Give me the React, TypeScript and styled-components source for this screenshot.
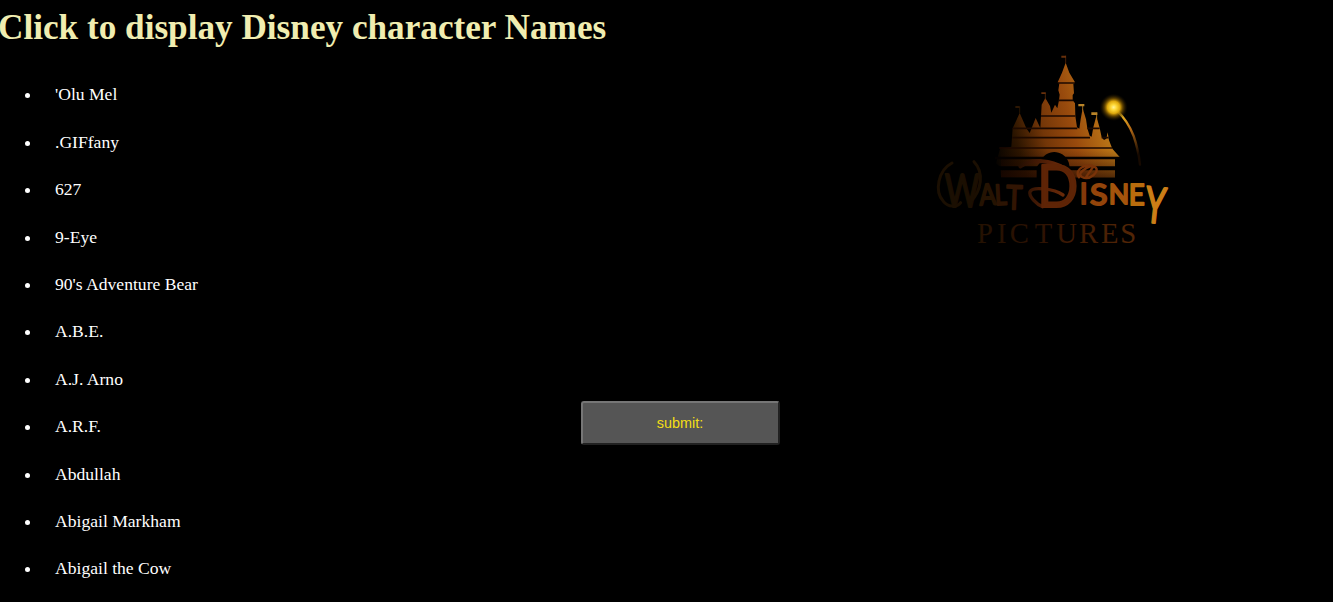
import React from "react";
import styled, { createGlobalStyle } from "styled-components";

const GlobalStyle = createGlobalStyle`
  html, body { margin: 0; background: #000; overflow: hidden; }
`;

const Page = styled.main`
  height: 602px;
  overflow: hidden;
  background: #000;
  color: #fff;
  font-family: "Liberation Serif", "Times New Roman", serif;
`;

const Title = styled.h1`
  margin: 0 0 0 -2px;
  padding-top: 7px;
  height: 47px;
  color: #f0edb0;
  font-size: 35.2px;
  line-height: 41px;
  white-space: nowrap;
`;

const Content = styled.div`
  display: grid;
  grid-template-columns: 581px 339px 1fr;
  align-items: start;
`;

const NameList = styled.ul`
  margin: 17.3px 0 0;
  padding: 0 0 0 42px;
  font-size: 17.6px;
`;

const Name = styled.li`
  padding-left: 13px;
  line-height: 47.4px;
`;

const Submit = styled.button`
  width: 199px;
  height: 44px;
  margin-top: 347px;
  padding: 0 1px 0 0;
  border: 2px outset #767676;
  border-radius: 3px;
  background: #555;
  color: #f3de16;
  font: 14.4px "Liberation Sans", Arial, sans-serif;
`;

const Logo = styled.svg`
  display: block;
  width: 270px;
  height: 220px;
  margin-top: -14px;
`;

const names = [
  "'Olu Mel", ".GIFfany", "627", "9-Eye", "90's Adventure Bear", "A.B.E.",
  "A.J. Arno", "A.R.F.", "Abdullah", "Abigail Markham", "Abigail the Cow",
];

type Letter = { c: string; x: number; y: number; size: number; sx?: number; rot?: number; ink: string };

const wordmark: Letter[] = [
  { c: "W", x: 74, y: 502, size: 140, sx: 0.72, ink: "#1b0f02" },
  { c: "A", x: 179, y: 496, size: 88, sx: 0.84, rot: -3, ink: "#251302" },
  { c: "L", x: 226, y: 495, size: 84, sx: 0.82, rot: -3, ink: "#2c1403" },
  { c: "T", x: 257, y: 507, size: 100, sx: 0.82, rot: 2, ink: "#321503" },
  { c: "D", x: 352, y: 502, size: 176, sx: 0.92, ink: "#5e2406" },
  { c: "I", x: 479, y: 493, size: 84, ink: "#85390a" },
  { c: "S", x: 510, y: 494, size: 84, sx: 1.15, ink: "#93440a" },
  { c: "N", x: 566, y: 493, size: 82, sx: 0.98, ink: "#a4540c" },
  { c: "E", x: 626, y: 495, size: 88, sx: 0.94, ink: "#b96c0d" },
  { c: "Y", x: 670, y: 545, size: 150, sx: 0.66, rot: 6, ink: "#cb7e17" },
];

function CastleLogo() {
  return (
    <Logo viewBox="0 0 810 660" role="img" aria-label="Walt Disney Pictures">
      <defs>
        <linearGradient id="stone" gradientUnits="userSpaceOnUse" x1="230" y1="370" x2="595" y2="270">
          <stop offset="0" stopColor="#060300" />
          <stop offset=".2" stopColor="#2c1500" />
          <stop offset=".42" stopColor="#733608" />
          <stop offset=".65" stopColor="#984a0d" />
          <stop offset=".86" stopColor="#b46c14" />
          <stop offset="1" stopColor="#bd821c" />
        </linearGradient>
        <linearGradient id="shade" x1="0" y1="0" x2="0" y2="1">
          <stop offset=".45" stopColor="#200800" stopOpacity="0" />
          <stop offset="1" stopColor="#200800" stopOpacity=".65" />
        </linearGradient>
        <linearGradient id="ink" gradientUnits="userSpaceOnUse" x1="170" y1="0" x2="640" y2="0">
          <stop offset="0" stopColor="#241101" />
          <stop offset=".4" stopColor="#2c1203" />
          <stop offset=".65" stopColor="#431c04" />
          <stop offset="1" stopColor="#532606" />
        </linearGradient>
        <linearGradient id="trail" x1="0" y1="0" x2=".6" y2="1">
          <stop stopColor="#ffd52c" />
          <stop offset=".5" stopColor="#b96d16" />
          <stop offset="1" stopColor="#160900" />
        </linearGradient>
        <linearGradient id="swash" gradientUnits="userSpaceOnUse" x1="300" y1="0" x2="475" y2="0">
          <stop stopColor="#250f02" />
          <stop offset=".5" stopColor="#582107" />
          <stop offset="1" stopColor="#7b340b" />
        </linearGradient>
        <radialGradient id="star">
          <stop stopColor="#fff39a" />
          <stop offset=".2" stopColor="#ffda3a" />
          <stop offset=".45" stopColor="#dea80c" />
          <stop offset=".65" stopColor="#795400" stopOpacity=".8" />
          <stop offset="1" stopColor="#201400" stopOpacity="0" />
        </radialGradient>
      </defs>
      <path
        fill="url(#stone)"
        d="M437 68L448 98L465 127L460 132L462 160L458 165V181L465 190L466 228L471 262L478 266L482 238L488 205L498 238L502 265L509 287L515 290L520 262L529 228L539 264L545 292L552 300L559 296L563 277L567 301L577 326L599 351L585 355V412H243L240 380L228 370L240 327L274 320L278 265L299 219L319 265L329 279L347 234L361 264L365 194L376 174L390 198L394 218L405 194L412 205L417 181L419 164L415 151L418 130L413 127L426 98Z"
      />
      <path fill="url(#shade)" d="M243 265H567L577 326L599 351L585 355V412H243z" />
      <path fill="none" stroke="#1c0900" strokeWidth="5" d="M414 129H465M415 181H460M363 228H466M278 265H472M502 265H539M277 293H510M545 293H566M238 324H576" />
      <path fill="none" stroke="#050100" strokeWidth="7" d="M225 354H602" />
      <path fill="none" stroke="#000" strokeWidth="12" d="M225 385H600" />
      <path fill="#000" d="M361 367C375 326 430 326 446 367L456 414H350V381z" />
      <g fill="none" strokeWidth="2.5">
        <path stroke="#572407" d="M437 47V70" />
        <path stroke="#51270a" d="M376 158V178" />
        <path stroke="#2d1703" d="M299 200V220" />
        <path stroke="#ad7722" d="M488 192V212M530 218V237" />
      </g>
      <path fill="#68300b" d="M424 47H438V53H424zM364 157H377V162H364z" />
      <path fill="#2d1703" d="M286 198H299V204H286z" />
      <path fill="#b98429" d="M475 192H493V199H475zM514 217H532V225H514z" />
      <path fill="none" stroke="url(#trail)" strokeWidth="7" strokeLinecap="round" d="M590 211Q624 243 641 288Q655 328 660 374" />
      <ellipse cx="581" cy="202" rx="42" ry="41" fill="url(#star)" />
      <g fill="none" strokeLinecap="round">
        <path stroke="#1b0f02" strokeWidth="9" d="M96 369C55 390 42 454 70 484C84 502 112 503 122 488M162 365C193 398 185 450 151 487" />
        <path stroke="url(#swash)" strokeWidth="12" d="M301 379C335 354 396 362 430 384" />
        <path stroke="url(#swash)" strokeWidth="10" d="M368 500C350 493 325 469 330 455C338 438 402 447 429 465" />
        <path stroke="#793309" strokeWidth="7" d="M477 412C459 385 504 368 525 381C543 393 509 423 486 411C467 399 502 382 516 377M499 410L519 381" />
      </g>
      <g fontFamily="Lato, sans-serif" fontWeight="400" strokeLinejoin="round" strokeWidth="6">
        {wordmark.map((l) => (
          <text
            key={l.c}
            fontSize={l.size}
            fill={l.ink}
            stroke={l.ink}
            transform={`translate(${l.x} ${l.y}) rotate(${l.rot ?? 0}) scale(${l.sx ?? 1} 1)`}
          >
            {l.c}
          </text>
        ))}
      </g>
      <text x="171 231 269 344 409 477 543 601" y="609" fontFamily="Liberation Serif, serif" fontSize="86" fill="url(#ink)">
        PICTURES
      </text>
    </Logo>
  );
}

export default function App() {
  return (
    <Page>
      <GlobalStyle />
      <Title>Click to display Disney character Names</Title>
      <Content>
        <NameList>
          {names.map((name) => <Name key={name}>{name}</Name>)}
        </NameList>
        <Submit type="button">submit:</Submit>
        <CastleLogo />
      </Content>
    </Page>
  );
}
